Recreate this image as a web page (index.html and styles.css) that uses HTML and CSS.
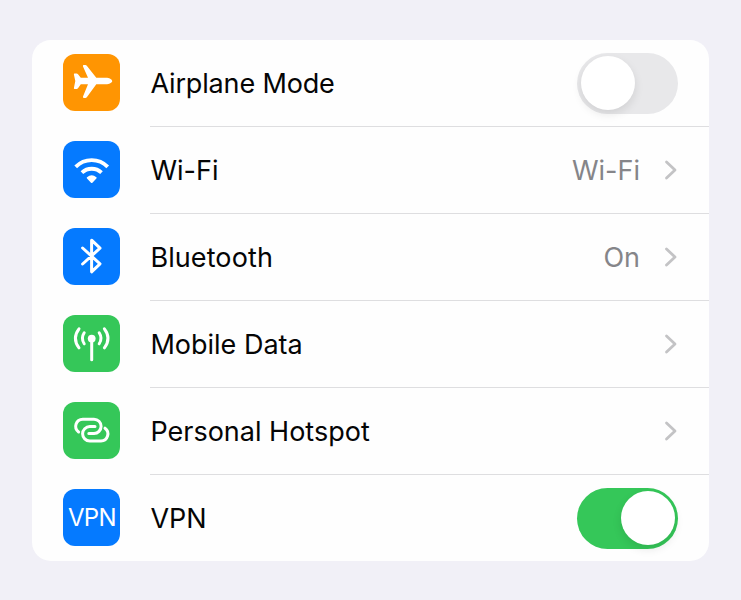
FILE: index.html
```html
<!doctype html>
<html lang="en">
  <head>
    <meta charset="UTF-8">
    <meta name="viewport" content="width=device-width, initial-scale=1.0">
    <title>Settings</title>
    <link rel="stylesheet" href="styles.css">
  </head>
  <body>
    <div class="settings">
      <div class="row">
        <svg class="icon orange" viewBox="0 0 57 57">
          <path class="fill" d="M11.6 19.6H13.6Q14.4 19.6 15 20.3L17.8 23.7H25L20 12.4Q19.5 11 20.9 11H22.4Q23.2 11 23.8 11.7L33.3 23.7H43C46 23.7 49.2 25.3 49.2 27S46 30.3 43 30.3H33.3L23.8 43.2Q23.2 44 22.4 44H20.9Q19.5 44 20 42.6L25 30.3H17.8L15 34.3Q14.4 35 13.6 35H11.6Q10.7 35 10.9 34L12.3 27L10.9 20.6Q10.7 19.6 11.6 19.6Z" />
        </svg>
        <div class="content">
          <span class="label airplane">Airplane Mode</span>
          <span class="switch"></span>
        </div>
      </div>

      <div class="row">
        <svg class="icon blue" viewBox="0 0 57 57">
          <path class="wave" d="M12.7 25.9A22.4 22.4 0 0 1 44.7 25.9M18.9 31.6A14.4 14.4 0 0 1 38.5 31.6" />
          <path class="fill" d="M24 36.2Q28.7 32.4 33.4 36.2Q34 36.8 33.4 37.4L29.4 41.7Q28.7 42.4 28 41.7L24 37.4Q23.4 36.8 24 36.2Z" />
        </svg>
        <div class="content">
          <span class="label">Wi-Fi</span>
          <span class="value">Wi-Fi</span>
          <svg class="chevron" viewBox="0 0 14 20"><path d="M2.5 2L11 10L2.5 18" /></svg>
        </div>
      </div>

      <div class="row">
        <svg class="icon blue" viewBox="0 0 57 57">
          <path class="line" d="M19.6 20L37 35.8L28.6 43.8V12.2L37 20.2L19.6 36" />
        </svg>
        <div class="content">
          <span class="label bluetooth">Bluetooth</span>
          <span class="value">On</span>
          <svg class="chevron" viewBox="0 0 14 20"><path d="M2.5 2L11 10L2.5 18" /></svg>
        </div>
      </div>

      <div class="row">
        <svg class="icon green" viewBox="0 0 57 57">
          <circle class="fill" cx="28.7" cy="23.6" r="3.9" />
          <path class="line" d="M28.7 24V44.8" />
          <path class="line" d="M21.2 17.8Q17.6 23.3 21.2 28.8M36.2 17.8Q39.8 23.3 36.2 28.8M16 13.8Q8.8 23.3 16 32.8M41.4 13.8Q48.6 23.3 41.4 32.8" />
        </svg>
        <div class="content">
          <span class="label">Mobile Data</span>
          <svg class="chevron" viewBox="0 0 14 20"><path d="M2.5 2L11 10L2.5 18" /></svg>
        </div>
      </div>

      <div class="row">
        <svg class="icon green" viewBox="0 0 57 57">
          <path class="line" d="M15.6 30A7.1 7.1 0 0 1 19.8 17.2H31A7 7 0 0 1 31 31.4H25.8" />
          <path class="line" d="M42 26.2A7.1 7.1 0 0 1 38 39H26.8A7 7 0 0 1 26.8 24.6H32" />
        </svg>
        <div class="content">
          <span class="label">Personal Hotspot</span>
          <svg class="chevron" viewBox="0 0 14 20"><path d="M2.5 2L11 10L2.5 18" /></svg>
        </div>
      </div>

      <div class="row">
        <div class="icon blue vpn">VPN</div>
        <div class="content">
          <span class="label">VPN</span>
          <span class="switch on"></span>
        </div>
      </div>
    </div>
  </body>
</html>
```

FILE: styles.css
```css
* {
  margin: 0;
  padding: 0;
  box-sizing: border-box;
}

body {
  height: 600px;
  padding: 39.5px 32px 0;
  background: #f1f0f7;
  color: #050505;
  font-family: Inter, "Liberation Sans", sans-serif;
  overflow: hidden;
}

.settings {
  height: 521.5px;
  background: #fefefe;
  border-radius: 19px;
  overflow: hidden;
}

.row {
  display: flex;
  height: 87px;
  padding-left: 31.4px;
}

.icon {
  flex: none;
  width: 57px;
  height: 57px;
  margin: 14.5px 30px 0 0;
  border-radius: 12px;
}

.orange {
  background: #ff9502;
}

.blue {
  background: #057aff;
}

.green {
  background: #35c759;
}

.fill {
  fill: #fff;
}

.line,
.wave {
  fill: none;
  stroke: #fff;
  stroke-width: 3;
  stroke-linecap: round;
  stroke-linejoin: round;
}

.wave {
  stroke-width: 3.8;
  stroke-linecap: butt;
}

.vpn {
  color: #fff;
  font-size: 24px;
  letter-spacing: -0.7px;
  line-height: 57px;
  text-align: center;
}

.content {
  flex: 1;
  display: flex;
  align-items: center;
  padding-right: 31px;
  border-bottom: 1px solid #dedee0;
}

.row:last-child .content {
  border-bottom-color: transparent;
}

.label {
  margin-right: auto;
  padding-top: 3px;
  font-size: 27px;
  line-height: 34px;
  white-space: nowrap;
}

.airplane {
  letter-spacing: -0.15px;
}

.bluetooth {
  letter-spacing: 0.1px;
}

.value {
  margin-right: 24px;
  padding-top: 3px;
  color: #858589;
  font-size: 27px;
  line-height: 34px;
}

.chevron {
  width: 14px;
  height: 20px;
  fill: none;
  stroke: #c3c3c5;
  stroke-width: 2.8;
  stroke-linecap: round;
  stroke-linejoin: round;
}

.switch {
  width: 101px;
  height: 61px;
  margin-top: 1px;
  padding: 3.5px;
  border-radius: 31px;
  background: #e8e8ea;
}

.switch::before {
  content: "";
  display: block;
  width: 54px;
  height: 54px;
  border-radius: 50%;
  background: #fff;
  box-shadow: 0 4px 10px rgba(0, 0, 0, 0.1);
}

.switch.on {
  background: #35c759;
}

.switch.on::before {
  margin-left: auto;
}
```
